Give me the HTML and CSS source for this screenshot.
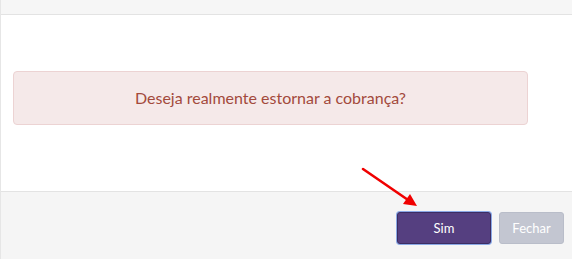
FILE: index.html
```html
<!DOCTYPE html>
<html lang="pt-BR">
<head>
<meta charset="utf-8">
<title>Estornar cobrança</title>
<link rel="stylesheet" href="styles.css">
</head>
<body>
<div class="modal">
  <div class="modal-header"></div>
  <div class="modal-body">
    <div class="alert">Deseja realmente estornar a cobrança?</div>
  </div>
  <div class="modal-footer">
    <button class="btn btn-primary">Sim</button>
    <button class="btn btn-secondary">Fechar</button>
  </div>
  <svg class="arrow" width="70" height="50" viewBox="0 0 70 50">
    <line x1="2" y1="2" x2="50" y2="35" stroke="#f00000" stroke-width="2.6" stroke-linecap="round"/>
    <polygon points="56,39 42,37 49,27" fill="#f00000"/>
  </svg>
</div>
</body>
</html>
```

FILE: styles.css
```css
html, body {
  margin: 0;
  padding: 0;
  background: #ffffff;
  font-family: Lato, "Open Sans", Arial, sans-serif;
}
.modal {
  position: relative;
  width: 571px;
  border-left: 1px solid #e6e6e6;
  display: flex;
  flex-direction: column;
  height: 259px;
}
.modal-header {
  height: 14px;
  background: #f6f6f6;
  border-bottom: 1px solid #e3e3e3;
}
.modal-body {
  flex: 0 0 auto;
  padding: 56px 44px 66px 12px;
}
.alert {
  background: #f5e9e9;
  border: 1px solid #ecd3d3;
  border-radius: 4px;
  color: #a34a3c;
  font-size: 16px;
  line-height: 22px;
  padding: 15px;
  text-align: center;
}
.modal-footer {
  flex: 1;
  background: #f5f5f5;
  border-top: 1px solid #e3e3e3;
  display: flex;
  justify-content: flex-end;
  align-items: flex-start;
  gap: 8px;
  padding: 20px 8px 0 0;
}
.btn {
  font-family: Lato, "Open Sans", Arial, sans-serif;
  font-size: 13px;
  height: 32px;
  border-radius: 3px;
  color: #ffffff;
  cursor: pointer;
}
.btn-primary {
  width: 94px;
  background: #553f80;
  border: 1px solid #3c2d63;
  box-shadow: 0 0 0 1px #8aa8e6;
}
.btn-secondary {
  width: 65px;
  background: #c3c6d1;
  border: 1px solid #b9bdc9;
}
.arrow {
  position: absolute;
  left: 360px;
  top: 167px;
}
```
